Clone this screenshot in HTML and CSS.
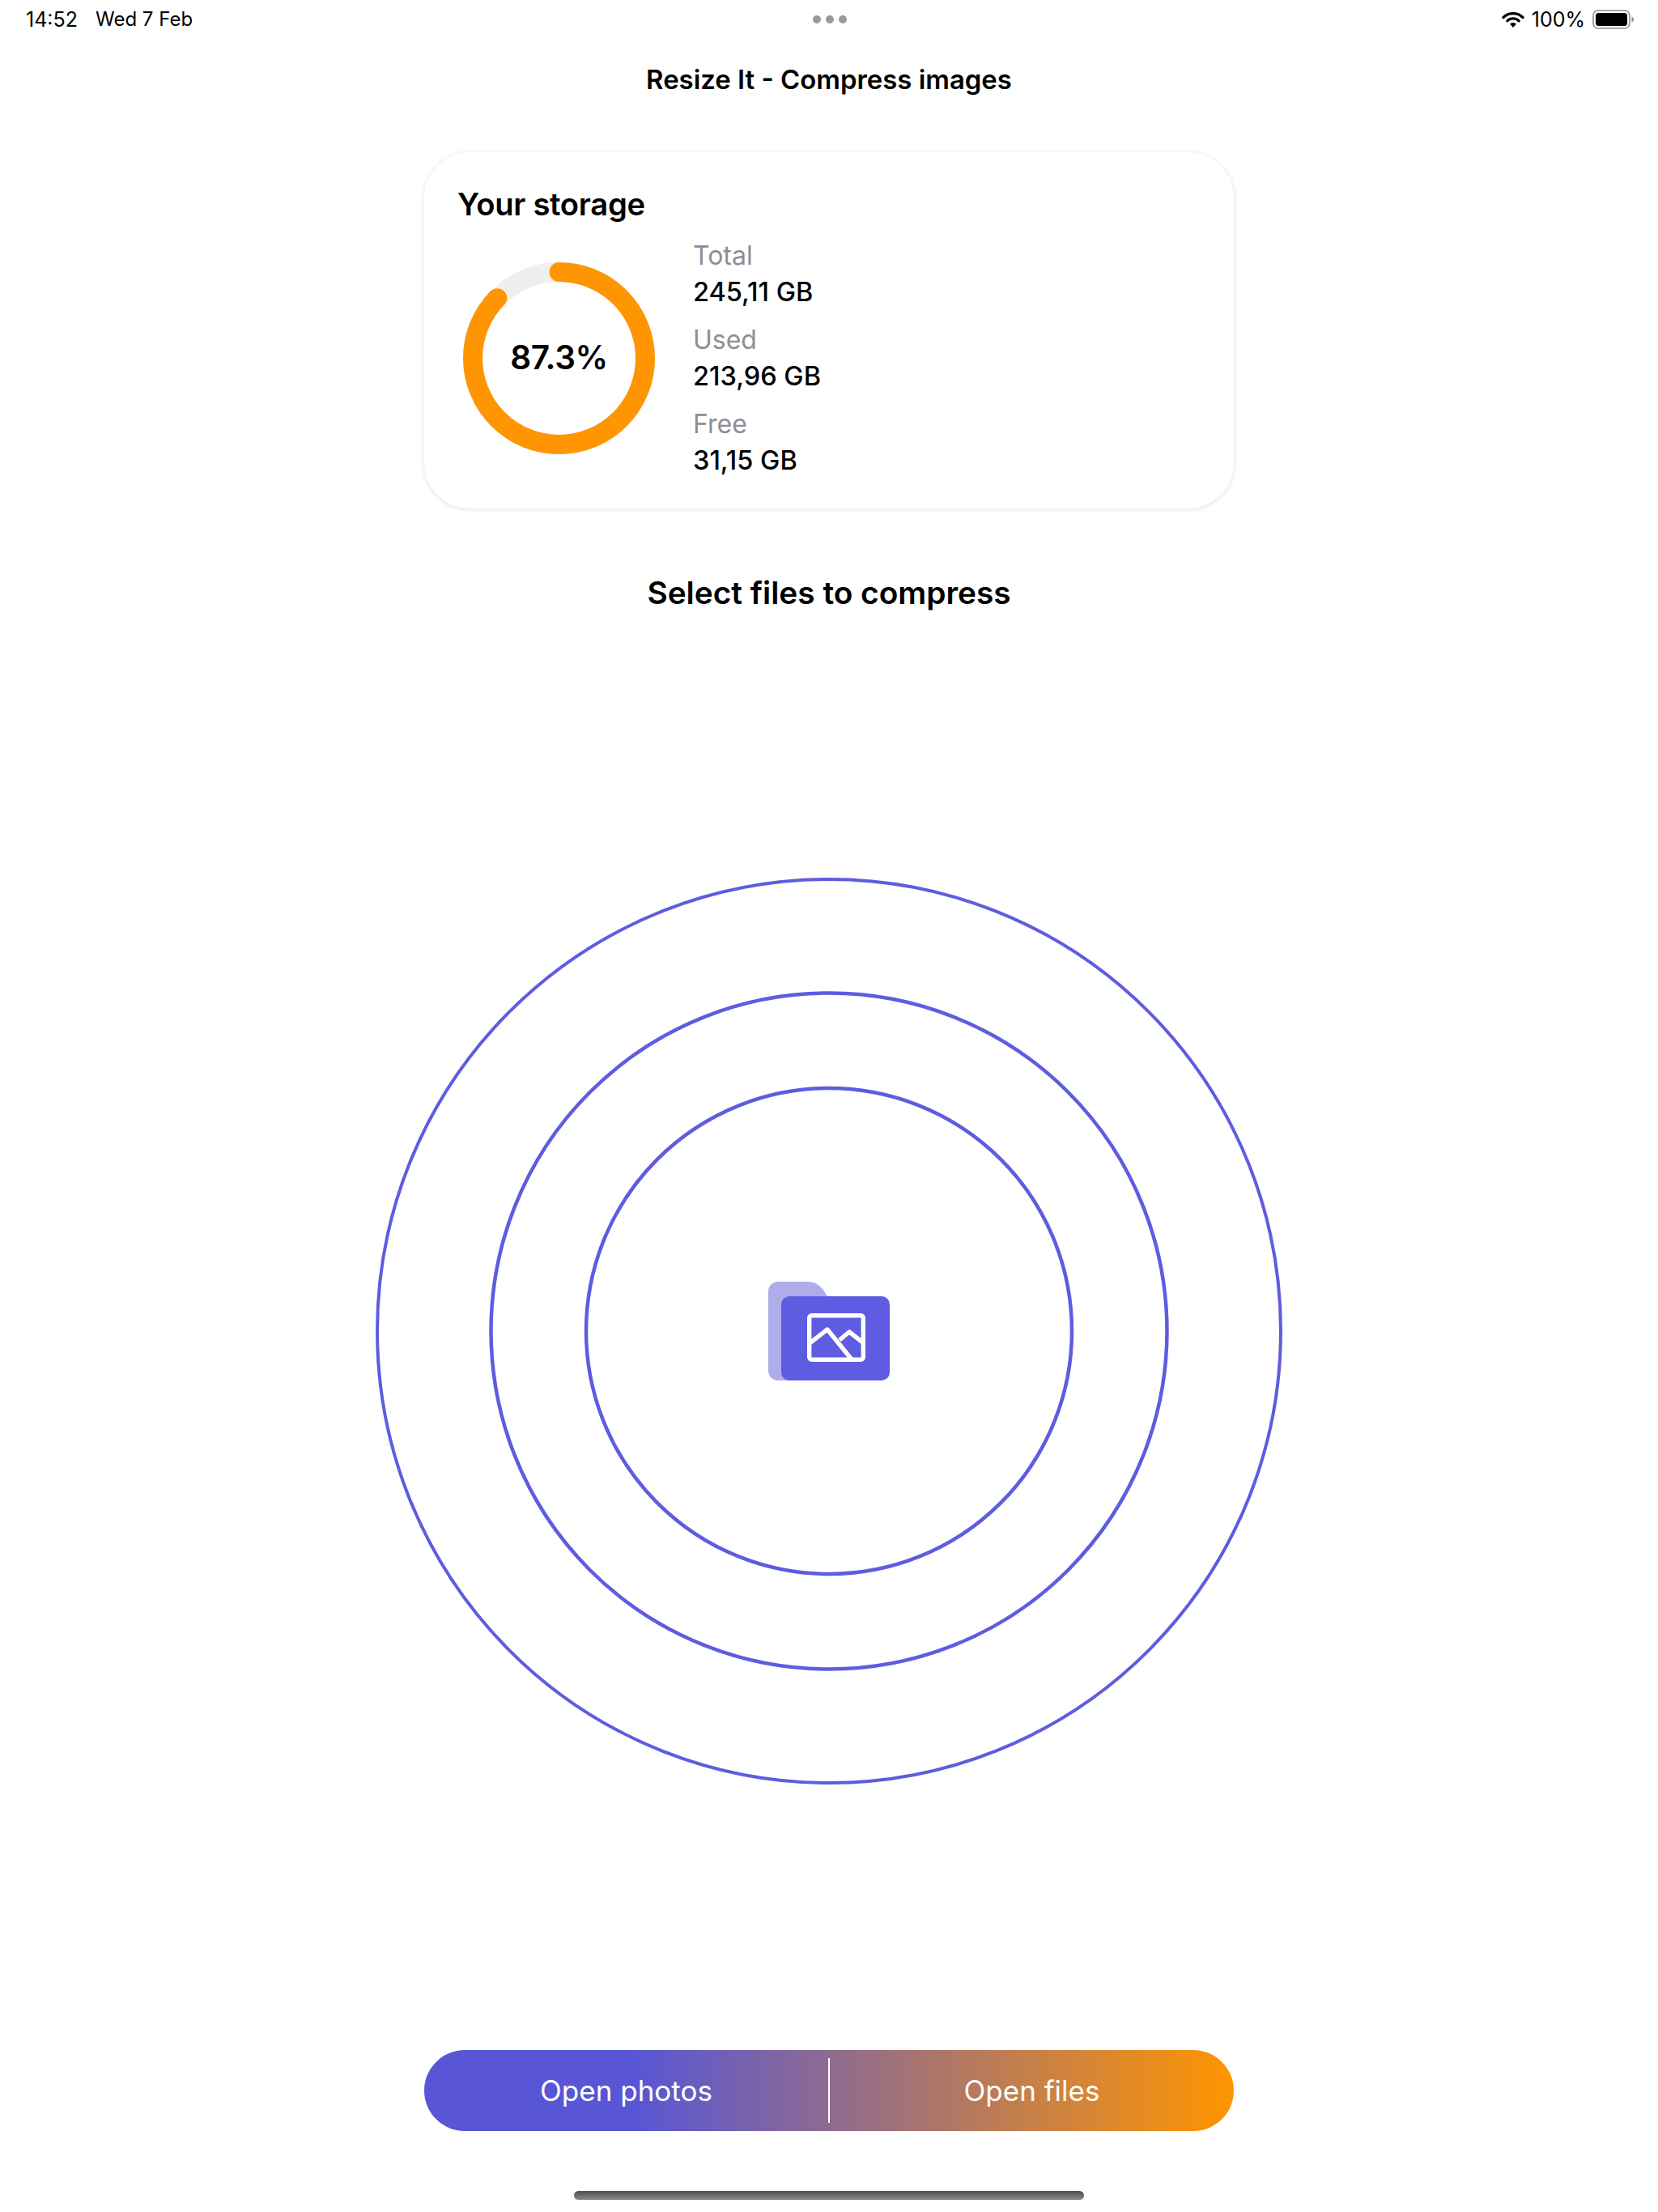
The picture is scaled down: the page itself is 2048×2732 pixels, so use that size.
FILE: index.html
```html
<!DOCTYPE html>
<html lang="en">
<head>
<meta charset="utf-8">
<title>Resize It - Compress images</title>
<link rel="stylesheet" href="styles.css">
</head>
<body>
<main class="screen">
  <header class="status">
    <div class="status-left"><span class="time">14:52</span><span>Wed 7 Feb</span></div>
    <div class="dots"><i></i><i></i><i></i></div>
    <div class="status-right">
      <svg class="wifi" width="28" height="20" viewBox="0 0 28 20"><path d="M2 7.500 A17 17 0 0 1 26 7.500" fill="none" stroke="#000" stroke-width="3.200" stroke-linecap="round"/><path d="M6.800 11.800 A10.500 10.500 0 0 1 21.200 11.800" fill="none" stroke="#000" stroke-width="3.200" stroke-linecap="round"/><path d="M14 20 L10 15.600 A5.800 5.800 0 0 1 18 15.600 Z" fill="#000"/></svg>
      <span class="battery-text">100%</span>
      <svg class="battery" width="52" height="24" viewBox="0 0 52 24"><rect x="1" y="1" width="45" height="22" rx="6" fill="none" stroke="#8e8e93" stroke-width="1.600"/><rect x="4" y="4" width="39" height="16" rx="3.500" fill="#000"/><path d="M48.500 8.500 C50.500 9.500 51 10.500 51 12 C51 13.500 50.500 14.500 48.500 15.500 Z" fill="#8e8e93"/></svg>
    </div>
  </header>

  <h1 class="title">Resize It - Compress images</h1>

  <section class="card">
    <h2 class="card-title">Your storage</h2>
    <div class="card-body">
      <div class="ring">
        <svg width="237" height="237" viewBox="0 0 237 237">
          <circle cx="118.500" cy="118.500" r="106.500" fill="none" stroke="#efeff0" stroke-width="24"/>
          <circle class="ring-value" cx="118.500" cy="118.500" r="106.500" pathLength="100"/>
        </svg>
        <span class="ring-label">87.3%</span>
      </div>
      <dl class="stats">
        <div class="stat"><dt>Total</dt><dd>245,11 GB</dd></div>
        <div class="stat"><dt>Used</dt><dd>213,96 GB</dd></div>
        <div class="stat"><dt>Free</dt><dd>31,15 GB</dd></div>
      </dl>
    </div>
  </section>

  <h2 class="select">Select files to compress</h2>

  <section class="stage">
    <svg class="rings" width="1120" height="1120" viewBox="0 0 1120 1120">
      <circle cx="560" cy="560" r="558" fill="none" stroke="#5e5ce0" stroke-width="4"/>
      <circle cx="560" cy="560" r="417.500" fill="none" stroke="#5e5ce0" stroke-width="4.500"/>
      <circle cx="560" cy="560" r="300" fill="none" stroke="#5e5ce0" stroke-width="4.500"/>
    </svg>
    <svg class="folder" width="150" height="122" viewBox="0 0 150 122">
      <path d="M0 12 A12 12 0 0 1 12 0 H48 C58 0 63 4 68 10 L74 20 H60 V122 H12 A12 12 0 0 1 0 110 Z" fill="#aeade9"/>
      <rect x="16" y="18" width="134" height="104" rx="10" fill="#5e5ce0"/>
      <rect x="50.700" y="41.700" width="66.600" height="54.600" rx="3" fill="none" stroke="#fff" stroke-width="5.400"/>
      <path d="M51 76 L73 59 L103 96 M88 72 L100 62 L118 76" fill="none" stroke="#fff" stroke-width="5.400" stroke-linejoin="round"/>
    </svg>
  </section>

  <div class="actions">
    <button class="action" type="button">Open photos</button>
    <span class="divider"></span>
    <button class="action" type="button">Open files</button>
  </div>

  <div class="home"></div>
</main>
</body>
</html>
```
FILE: styles.css
```css
* { box-sizing: border-box; }
html, body { margin: 0; padding: 0; background: #fff; }
body { font-family: Inter, "Liberation Sans", sans-serif; color: #000; }
.screen { width: 2048px; height: 2732px; display: flex; flex-direction: column; align-items: center; overflow: hidden; }

.status { width: 100%; height: 48px; padding: 0 29px 0 32px; display: grid; grid-template-columns: 1fr auto 1fr; align-items: center; font-size: 24px; }
.status-left { display: flex; gap: 22px; }
.time { font-size: 25px; }
.status-right { display: flex; justify-content: flex-end; align-items: center; gap: 9px; }
.battery-text { font-size: 25px; }
.dots { display: flex; gap: 6px; margin-left: -1px; }
.dots i { width: 10px; height: 10px; border-radius: 50%; background: #999; }

.title { margin: 30px 0 0; font-size: 32.900px; line-height: 40px; font-weight: 600; }

.card { width: 1000px; height: 440px; margin-top: 70px; padding: 40px 41px 0; border-radius: 56px; background: #fff; box-shadow: 0 1px 6px rgba(0, 0, 0, .13); }
.card-title { margin: 0; font-size: 38.200px; line-height: 48px; font-weight: 600; letter-spacing: -.3px; }
.card-body { display: flex; align-items: flex-start; gap: 47px; }
.ring { position: relative; width: 237px; height: 237px; margin: 48px 0 0 7px; flex: none; }
.ring svg { display: block; transform: rotate(-90deg); }
.ring-value { fill: none; stroke: #ff9500; stroke-width: 24; stroke-linecap: round; stroke-dasharray: 87.3 100; }
.ring-label { position: absolute; inset: 0 0 2px; display: flex; align-items: center; justify-content: center; font-size: 40.500px; font-weight: 600; letter-spacing: -.4px; }
.stats { margin: 19px 0 0; }
.stat { margin-bottom: 17px; }
.stat dt { font-size: 32px; line-height: 42px; color: #8e8e93; }
.stat dd { margin: 3px 0 0; font-size: 32.500px; line-height: 42px; font-weight: 500; }

.select { margin: 80px 0 0; font-size: 38.800px; line-height: 48px; font-weight: 600; }

.stage { position: relative; flex: none; width: 1120px; height: 1120px; margin-top: 328px; }
.rings { display: block; }
.folder { position: absolute; left: 485px; top: 499px; }

.actions { width: 1000px; height: 100px; margin-top: 328px; display: flex; align-items: center; border-radius: 50px; background: linear-gradient(90deg, #5856d6 0%, #5856d6 26%, #ff9500 100%); }
.action { flex: 1; height: 100%; border: 0; padding: 0; background: none; color: #fff; font: 400 35px Inter, "Liberation Sans", sans-serif; }
.divider { width: 2px; height: 80px; background: #fff; flex: none; }

.home { width: 630px; height: 11px; margin-top: 74px; border-radius: 6px; background: linear-gradient(180deg, #4d4d4d, #8a8a8a); }
```
